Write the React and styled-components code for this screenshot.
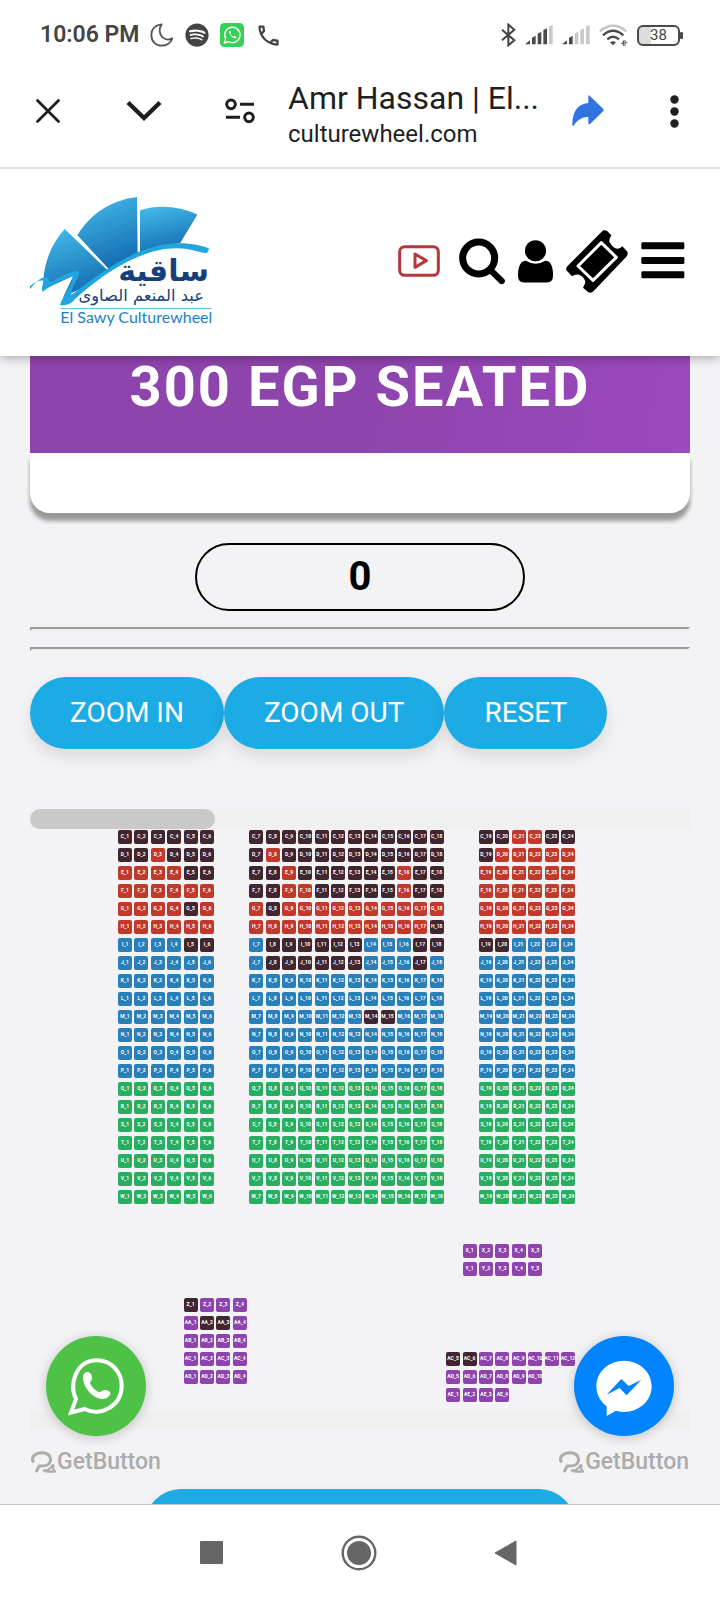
import React from "react";
import styled, { createGlobalStyle } from "styled-components";
import { FaSpotify } from "react-icons/fa";
import { MdOutlineLocalPhone } from "react-icons/md";

const GlobalStyle = createGlobalStyle`
  *, *::before, *::after { box-sizing: border-box; }
  body { margin: 0; background: #fff; font-family: Roboto, "Liberation Sans", sans-serif; }
  button { font-family: inherit; border: 0; padding: 0; margin: 0; background: none; cursor: pointer; }
  svg { display: block; flex: none; }
`;

const Screen = styled.div`
  display: flex;
  flex-direction: column;
  height: 100vh;
  overflow: hidden;
`;

/* ---------- phone status bar ---------- */

const StatusBar = styled.div`
  display: flex;
  align-items: center;
  justify-content: space-between;
  flex: none;
  height: 70px;
  padding: 0 36px 0 40px;
  color: #444;
`;

const StatusGroup = styled.div`
  display: flex;
  align-items: center;
  gap: ${(p) => p.$gap}px;
`;

const Clock = styled.time`
  font-size: 23px;
  line-height: 28px;
  font-weight: 600;
`;

const Battery = styled.div`
  position: relative;
  width: 43px;
  height: 21px;
  margin-right: 4px;
  border: 2px solid #4a4a4a;
  border-radius: 6px;
  background: linear-gradient(90deg, #ddd 30%, #fff 30%);
  font-size: 15px;
  line-height: 17px;
  text-align: center;

  &::after {
    content: "";
    position: absolute;
    right: -5px;
    top: 5px;
    width: 3px;
    height: 7px;
    background: #4a4a4a;
    border-radius: 1px;
  }
`;

/* ---------- browser bar ---------- */

const BrowserBar = styled.header`
  position: relative;
  z-index: 3;
  display: flex;
  align-items: center;
  flex: none;
  height: 99px;
  padding: 0 41px 15px 36px;
  border-bottom: 2px solid #dfdfdf;
  background: #fff;
  color: #1f1f1f;
`;

const BarButton = styled.button`
  display: flex;
  justify-content: center;
  flex: none;
  margin-right: ${(p) => p.$after || 0}px;
  color: inherit;
`;

const PageInfo = styled.div`
  flex: 1;
  min-width: 0;
  padding: 5px 30px 0 0;
`;

const PageTitle = styled.div`
  font-size: 32px;
  line-height: 40px;
  white-space: nowrap;
`;

const PageHost = styled.div`
  font-size: 24px;
  line-height: 32px;
`;

/* ---------- site ---------- */

const SiteHeader = styled.header`
  position: relative;
  z-index: 2;
  display: flex;
  align-items: center;
  justify-content: space-between;
  flex: none;
  height: 187px;
  padding: 0 35px 3px 30px;
  background: #fff;
  box-shadow: 0 2px 10px rgba(0, 0, 0, 0.3);
`;

const SiteNav = styled.nav`
  display: flex;
  align-items: center;
  gap: 13px;
`;

const View = styled.main`
  position: relative;
  flex: 1;
  min-height: 0;
  overflow: hidden;
  padding: 0 30px;
  background: #f3f3f5;
`;

const PriceBanner = styled.h2`
  margin: 0;
  padding-bottom: 35px;
  background: linear-gradient(100deg, #8e44ad 50%, #9b49bd);
  color: #fff;
  font-size: 56px;
  line-height: 62px;
  font-weight: 700;
  letter-spacing: 2px;
  text-align: center;
`;

const CardFoot = styled.div`
  height: 60px;
  background: #fff;
  border-radius: 0 0 20px 20px;
  box-shadow: 0 8px 4px #999;
`;

const SeatCount = styled.output`
  display: block;
  width: 50%;
  margin: 30px auto 16px;
  border: 2px solid #000;
  border-radius: 34px;
  color: #000;
  font-size: 40px;
  line-height: 64px;
  font-weight: 700;
  text-align: center;
`;

const Rule = styled.hr`
  margin: 0 0 16px;
  border: 2px solid;
  border-color: #9a9a9c #eeeeee #eeeeee #9a9a9c;
`;

const ZoomControls = styled.div`
  display: flex;
  margin: 26px 0 60px;
`;

const PillButton = styled.button`
  height: 72px;
  padding: 0 40px;
  border-radius: 36px;
  background: #1cabe4;
  color: #fff;
  font-size: 28px;
  line-height: 32px;
  box-shadow: 0 8px 15px rgba(0, 0, 0, 0.1);
`;

const ScrollTrack = styled.div`
  height: 20px;
  border-radius: 2px;
  background: #f0f0f0;
`;

const ScrollThumb = styled.div`
  width: 28%;
  height: 20px;
  border-radius: 10px;
  background: #c9c9c9;
`;

const SeatMap = styled.div`
  display: flex;
  flex-direction: column;
  gap: 4px;
  width: 457px;
  margin: 1px 0 8px 88px;
`;

const SeatRow = styled.div`
  display: grid;
  grid-template-columns: repeat(28, 14px);
  justify-content: space-between;
  height: 14px;
`;

const seatColors = {
  taken: "#412630",
  red: "#c0392b",
  blue: "#2980b9",
  green: "#27ae60",
  purple: "#8e44ad",
};

const Seat = styled.button`
  display: flex;
  justify-content: center;
  grid-column: ${(p) => p.$col};
  height: 14px;
  border-radius: 2px;
  background: ${(p) => seatColors[p.$kind]};
  color: #fff;
  font-size: 5px;
  line-height: 12px;
  font-weight: 700;
  white-space: nowrap;
`;

const BookButton = styled(PillButton)`
  display: block;
  width: 430px;
  max-width: 100%;
  margin: 59px auto 0;
`;

const ChatWidget = styled.aside`
  position: absolute;
  bottom: 29px;
  ${(p) => p.$side}: 31px;
  display: flex;
  flex-direction: column;
  align-items: center;
  gap: 13px;
`;

const ChatButton = styled.button`
  width: 100px;
  height: 100px;
  border-radius: 50%;
  background: ${(p) => p.$color};
  box-shadow: 0 2px 12px rgba(0, 0, 0, 0.2);
`;

const ChatBrand = styled.a`
  display: flex;
  align-items: center;
  gap: 1px;
  color: #acacac;
  font-size: 23px;
  line-height: 26px;
  font-weight: 500;
  text-decoration: none;
`;

const SystemNav = styled.nav`
  display: flex;
  align-items: center;
  justify-content: center;
  gap: 99px;
  flex: none;
  height: 96px;
  padding-right: 2px;
  border-top: 1px solid #c4c4c4;
  background: #fff;
`;

const SystemButton = styled.button`
  display: flex;
  align-items: center;
  justify-content: center;
  width: 48px;
  height: 48px;
`;

/* ---------- drawings ---------- */

const Moon = () => (
  <svg width="24" height="24" viewBox="0 0 72 72" fill="none" stroke="#555" strokeWidth="5.5" strokeLinejoin="round">
    <path d="M35 4C14 6 4 20 4 36C4 56 18 68 35 68C50 68 63 59 67 46C58 51 46 50 38 43C27 33 26 16 35 4Z" />
  </svg>
);

const WhatsAppTile = () => (
  <svg width="24" height="24" viewBox="0 0 72 72" fill="none">
    <rect width="72" height="72" rx="13" fill="#35d257" />
    <path d="M13 60L17 47A23 23 0 1 1 26 56Z" stroke="#fff" strokeWidth="4" strokeLinejoin="round" />
    <path d="M28 25C25 32 39 49 48 46L50 42L43 38L40 41C36 39 33 36 31 32L34 30L31 23Z" fill="#fff" />
  </svg>
);

const Bluetooth = () => (
  <svg width="15" height="24" viewBox="0 0 45 72" fill="none" stroke="#444" strokeWidth="6">
    <path d="M3 20L40 52L22 67V5L40 20L3 52" />
  </svg>
);

const Signal = ({ bars }) => (
  <svg width="28" height="20" viewBox="0 0 84 60">
    {["M0 58L15 46V58Z", "M21 38L32 32V58H21Z", "M38 26L49 20V58H38Z", "M55 15L66 10V58H55Z", "M72 4L83 0V58H72Z"].map((d, i) => (
      <path key={d} d={d} fill={i < bars ? "#4a4a4a" : "#c9c9c9"} />
    ))}
  </svg>
);

const Wifi = () => (
  <svg width="29" height="23" viewBox="0 0 87 69" fill="none" strokeWidth="7">
    <path d="M2 22Q42 -12 82 22" stroke="#c4c4c4" />
    <path d="M12 34Q42 7 73 34" stroke="#4a4a4a" />
    <path d="M25 46Q42 31 60 46" stroke="#4a4a4a" />
    <path d="M33 55Q42 48 51 55L42 64Z" fill="#4a4a4a" />
    <path d="M66 58H73V50M73 50V66M78 66V48M78 56H85" stroke="#555" strokeWidth="3" />
  </svg>
);

const CloseX = () => (
  <svg width="24" height="24" viewBox="0 0 24 24" stroke="#1f1f1f" strokeWidth="2.8" strokeLinecap="round">
    <path d="M1.5 1.5L22.5 22.5M22.5 1.5L1.5 22.5" />
  </svg>
);

const Chevron = () => (
  <svg width="36" height="22" viewBox="0 0 36 22" fill="none" stroke="#1f1f1f" strokeWidth="4.4">
    <path d="M2 2.5L18 18L34 2.5" />
  </svg>
);

const Tune = () => (
  <svg width="30" height="26" viewBox="0 0 90 78" fill="none" stroke="#1f1f1f" strokeWidth="9">
    <circle cx="18" cy="19" r="13" />
    <path d="M45 19H87M3 58H45" />
    <circle cx="72" cy="58" r="13" />
  </svg>
);

const ShareArrow = () => (
  <svg width="32" height="32" viewBox="0 0 96 96">
    <path d="M49 1Q51 0 53 2L94 42Q96 45 94 48L55 86Q49 90 49 84V66C29 65 15 76 5 92Q1 95 1 91C1 55 13 27 49 24Z" fill="#2f74e0" />
  </svg>
);

const Dots = () => (
  <svg width="9" height="33" viewBox="0 0 9 33" fill="#1f1f1f">
    <circle cx="4.5" cy="4.5" r="4.2" />
    <circle cx="4.5" cy="16.5" r="4.2" />
    <circle cx="4.5" cy="28.5" r="4.2" />
  </svg>
);

const Logo = () => (
  <svg width="184" height="132" viewBox="30 45 552 396" role="img" aria-label="El Sawy Culturewheel">
    <defs>
      <linearGradient id="blade" x1="0" y1="0" x2="0.3" y2="1">
        <stop offset="0" stopColor="#45bdec" />
        <stop offset="1" stopColor="#1670b4" />
      </linearGradient>
    </defs>
    <path d="M134 147C98 187 74 240 70 300L68 330L160 287L130 350L200 318L262 270Z" fill="url(#blade)" />
    <path d="M172 166C212 100 275 60 351 51L353 224C320 237 295 252 269 270Z" fill="url(#blade)" />
    <path d="M360 91C418 72 482 80 532 104L480 190C435 193 400 202 360 220Z" fill="url(#blade)" />
    <path d="M30 328V319C44 305 60 300 73 302C66 318 64 327 68 335C94 315 130 298 158 289C160 315 129 341 120 376C145 375 155 370 166 356C270 262 380 204 470 205C520 205 545 222 561 219L568 206C520 187 450 184 397 202C310 226 235 284 154 345C154 315 180 291 177 277C170 264 130 286 91 307L83 292C65 288 48 304 30 328Z" fill="#20a5df" />
    <text x="567" y="302" textAnchor="end" fontFamily="DejaVu Sans, sans-serif" fontWeight="700" fontSize="90" fill="#173f7d">ساقية</text>
    <text x="552" y="364" textAnchor="end" fontFamily="DejaVu Sans, sans-serif" fontSize="49" fill="#173f7d">عبد المنعم الصاوى</text>
    <path d="M122 386H574" stroke="#56b5dd" strokeWidth="3" />
    <text x="121" y="429" fontFamily="Lato, sans-serif" fontSize="48" fill="#1d82bf">El Sawy Culturewheel</text>
  </svg>
);

const VideoIcon = () => (
  <svg width="42" height="32" viewBox="0 0 126 96" fill="none" stroke="#b3383c" strokeWidth="9" strokeLinejoin="round">
    <rect x="5" y="5" width="116" height="86" rx="15" />
    <path d="M51 27V67L85 47Z" />
  </svg>
);

const SearchIcon = () => (
  <svg width="46" height="47" viewBox="1 0 138 141" fill="none" stroke="#000">
    <circle cx="60" cy="60" r="48" strokeWidth="21" />
    <path d="M96 97L129 129" strokeWidth="19" strokeLinecap="round" />
  </svg>
);

const PersonIcon = () => (
  <svg width="35" height="43" viewBox="0 0 106 129">
    <circle cx="53" cy="32" r="32" />
    <path d="M24 62Q53 80 83 62C99 62 107 80 106 107Q106 128 88 128H18Q0 128 0 107C0 80 8 62 24 62Z" />
  </svg>
);

const TicketIcon = () => (
  <svg width="62" height="63" viewBox="0 0 186 189">
    <path d="M107 5Q115 -3 124 4L136 16Q129 27 130 35Q142 56 154 56Q164 56 169 49L183 64Q188 72 181 80L83 183Q75 192 66 186L51 173Q58 164 58 154Q52 138 39 134Q27 132 18 139L4 124Q-3 117 4 109Z" />
    <path d="M106 38L151 82L81 151L36 108Z" fill="none" stroke="#fff" strokeWidth="9" strokeLinejoin="round" />
  </svg>
);

const MenuIcon = () => (
  <svg width="44" height="38" viewBox="0 0 132 114">
    <rect x="1" y="1" width="129" height="21" rx="4" />
    <rect x="1" y="45" width="129" height="21" rx="4" />
    <rect x="1" y="88" width="129" height="21" rx="4" />
  </svg>
);

const WhatsAppMark = () => (
  <svg width="100" height="100" viewBox="0 0 300 300" fill="none">
    <path d="M75 230L90 189C67 147 90 73 153 73C195 73 227 107 227 149C227 209 164 244 116 219Z" stroke="#fff" strokeWidth="12" />
    <path d="M124 108C133 108 139 119 138 126C138 134 130 139 133 144C139 155 148 163 157 168C165 171 168 162 177 162C187 162 195 169 193 175C187 188 172 192 157 187C133 179 112 150 111 128C110 116 116 108 124 108Z" fill="#fff" />
  </svg>
);

const MessengerMark = () => (
  <svg width="100" height="100" viewBox="0 0 300 300">
    <path d="M150 74C104 74 67 108 67 151C67 175 79 197 98 211V240L126 224Q138 228 150 228C196 228 233 194 233 151C233 108 196 74 150 74Z" fill="#fff" />
    <path d="M98 176L142 129L164 150L202 131L158 178L137 156Z" fill="#0084ff" />
  </svg>
);

const BrandMark = () => (
  <svg width="25" height="22" viewBox="0 0 75 66" fill="none" stroke="#acacac">
    <path d="M8 34C-3 17 15 5 32 5C52 5 61 16 58 30C55 44 41 46 25 45C21 49 20 55 15 63" strokeWidth="9" />
    <path d="M36 59C52 60 59 52 67 40C66 51 64 54 71 61C60 63 52 62 44 61" strokeWidth="7" />
  </svg>
);

/* ---------- seating data ---------- */

const range = (from, to) => Array.from({ length: to - from + 1 }, (_, i) => from + i);

const hallTaken = {
  C: [...range(1, 20), 23, 24],
  D: [1, 2, 4, 5, 6, 7, ...range(9, 19)],
  E: [5, 6, 7, 8, ...range(10, 15), 17, 18],
  F: [7, 8, ...range(11, 15), 17, 18],
  G: [5, 8],
  H: [18],
  I: [5, 6, ...range(8, 13), ...range(17, 20)],
  J: [...range(8, 13), 17],
  M: [14, 15],
};

const hallKind = (letter) => (letter < "I" ? "red" : letter < "Q" ? "blue" : "green");

const block = (name, first, last, col, kind, taken = []) =>
  range(first, last).map((n, i) => ({
    label: `${name}_${n}`,
    col: col + i,
    kind: taken.includes(n) ? "taken" : kind,
  }));

const rows = [
  ..."CDEFGHIJKLMNOPQRSTUVW".split("").map((l) => [
    ...block(l, 1, 6, 1, hallKind(l), hallTaken[l]),
    ...block(l, 7, 18, 9, hallKind(l), hallTaken[l]),
    ...block(l, 19, 24, 23, hallKind(l), hallTaken[l]),
  ]),
  [],
  [],
  block("X", 1, 5, 22, "purple"),
  block("Y", 1, 5, 22, "purple"),
  [],
  block("Z", 1, 4, 5, "purple", [1]),
  block("AA", 1, 4, 5, "purple", [2, 3]),
  block("AB", 1, 4, 5, "purple"),
  [...block("AC", 1, 4, 5, "purple"), ...block("AC", 5, 12, 21, "purple", [5, 6])],
  [...block("AD", 1, 4, 5, "purple"), ...block("AD", 5, 10, 21, "purple")],
  block("AE", 1, 4, 21, "purple"),
];

const Chat = ({ side, color, label, children }) => (
  <ChatWidget $side={side}>
    <ChatButton $color={color} aria-label={label}>{children}</ChatButton>
    <ChatBrand href="#getbutton">
      <BrandMark />
      GetButton
    </ChatBrand>
  </ChatWidget>
);

export default function App() {
  return (
    <Screen>
      <GlobalStyle />
      <StatusBar>
        <StatusGroup $gap={11}>
          <Clock>10:06 PM</Clock>
          <Moon />
          <FaSpotify size={24} />
          <WhatsAppTile />
          <MdOutlineLocalPhone size={27} />
        </StatusGroup>
        <StatusGroup $gap={9}>
          <Bluetooth />
          <Signal bars={4} />
          <Signal bars={2} />
          <Wifi />
          <Battery>38</Battery>
        </StatusGroup>
      </StatusBar>

      <BrowserBar>
        <BarButton aria-label="Close" $after={66}><CloseX /></BarButton>
        <BarButton aria-label="Minimise" $after={63}><Chevron /></BarButton>
        <BarButton aria-label="Site settings" $after={33}><Tune /></BarButton>
        <PageInfo>
          <PageTitle>Amr Hassan | El...</PageTitle>
          <PageHost>culturewheel.com</PageHost>
        </PageInfo>
        <BarButton aria-label="Share" $after={66}><ShareArrow /></BarButton>
        <BarButton aria-label="More"><Dots /></BarButton>
      </BrowserBar>

      <SiteHeader>
        <Logo />
        <SiteNav>
          <BarButton aria-label="Videos" $after={6}><VideoIcon /></BarButton>
          <BarButton aria-label="Search"><SearchIcon /></BarButton>
          <BarButton aria-label="Account"><PersonIcon /></BarButton>
          <BarButton aria-label="Tickets"><TicketIcon /></BarButton>
          <BarButton aria-label="Menu"><MenuIcon /></BarButton>
        </SiteNav>
      </SiteHeader>

      <View>
        <PriceBanner>300 EGP SEATED</PriceBanner>
        <CardFoot />
        <SeatCount>0</SeatCount>
        <Rule />
        <Rule />
        <ZoomControls>
          <PillButton>ZOOM IN</PillButton>
          <PillButton>ZOOM OUT</PillButton>
          <PillButton>RESET</PillButton>
        </ZoomControls>
        <ScrollTrack>
          <ScrollThumb />
        </ScrollTrack>
        <SeatMap>
          {rows.map((seats, i) => (
            <SeatRow key={i}>
              {seats.map((s) => (
                <Seat key={s.label} $col={s.col} $kind={s.kind} disabled={s.kind === "taken"}>
                  {s.label}
                </Seat>
              ))}
            </SeatRow>
          ))}
        </SeatMap>
        <ScrollTrack />
        <BookButton aria-label="Book" />
        <Chat side="left" color="#4dc247" label="WhatsApp"><WhatsAppMark /></Chat>
        <Chat side="right" color="#0084ff" label="Messenger"><MessengerMark /></Chat>
      </View>

      <SystemNav>
        <SystemButton aria-label="Recent apps">
          <svg width="24" height="24" viewBox="0 0 24 24"><rect width="23" height="23" rx="1" fill="#666" /></svg>
        </SystemButton>
        <SystemButton aria-label="Home">
          <svg width="36" height="36" viewBox="0 0 36 36">
            <circle cx="18" cy="18" r="16.3" fill="none" stroke="#666" strokeWidth="2.4" />
            <circle cx="18" cy="18" r="12" fill="#666" />
          </svg>
        </SystemButton>
        <SystemButton aria-label="Back">
          <svg width="24" height="28" viewBox="0 0 24 28"><path d="M22 2V26L1 14Z" fill="#666" stroke="#666" strokeLinejoin="round" /></svg>
        </SystemButton>
      </SystemNav>
    </Screen>
  );
}
